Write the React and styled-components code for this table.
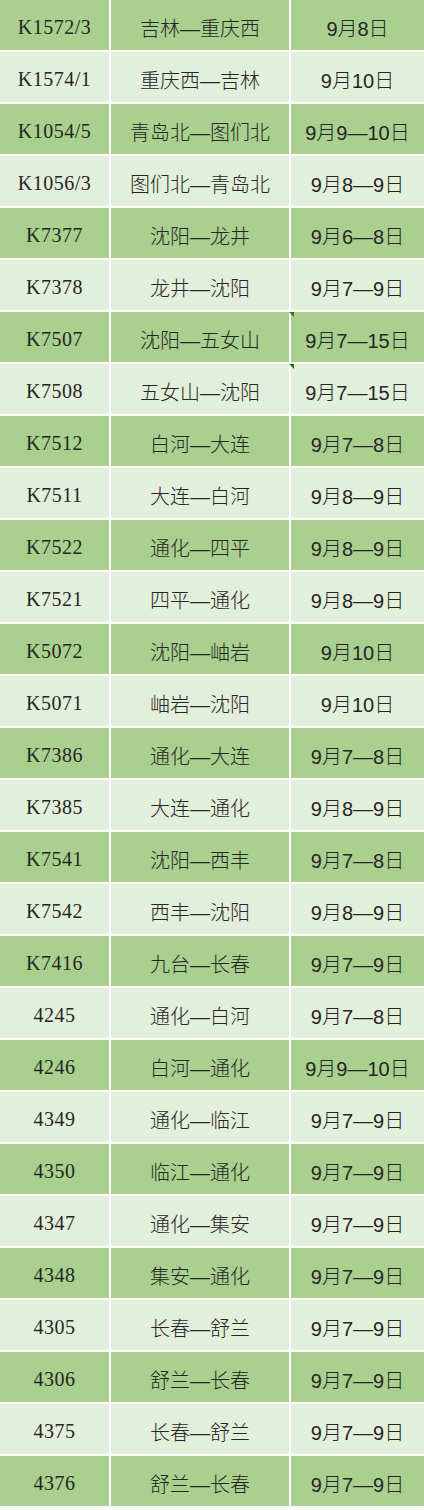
import React from 'react'
import styled, { createGlobalStyle } from 'styled-components';

//data
const trains = [
   ['K1572/3', '吉林—重庆西', '9月8日'],
   ['K1574/1', '重庆西—吉林', '9月10日'],
   ['K1054/5', '青岛北—图们北', '9月9—10日'],
   ['K1056/3', '图们北—青岛北', '9月8—9日'],
   ['K7377', '沈阳—龙井', '9月6—8日'],
   ['K7378', '龙井—沈阳', '9月7—9日'],
   ['K7507', '沈阳—五女山', '9月7—15日', true],
   ['K7508', '五女山—沈阳', '9月7—15日', true],
   ['K7512', '白河—大连', '9月7—8日'],
   ['K7511', '大连—白河', '9月8—9日'],
   ['K7522', '通化—四平', '9月8—9日'],
   ['K7521', '四平—通化', '9月8—9日'],
   ['K5072', '沈阳—岫岩', '9月10日'],
   ['K5071', '岫岩—沈阳', '9月10日'],
   ['K7386', '通化—大连', '9月7—8日'],
   ['K7385', '大连—通化', '9月8—9日'],
   ['K7541', '沈阳—西丰', '9月7—8日'],
   ['K7542', '西丰—沈阳', '9月8—9日'],
   ['K7416', '九台—长春', '9月7—9日'],
   ['4245', '通化—白河', '9月7—8日'],
   ['4246', '白河—通化', '9月9—10日'],
   ['4349', '通化—临江', '9月7—9日'],
   ['4350', '临江—通化', '9月7—9日'],
   ['4347', '通化—集安', '9月7—9日'],
   ['4348', '集安—通化', '9月7—9日'],
   ['4305', '长春—舒兰', '9月7—9日'],
   ['4306', '舒兰—长春', '9月7—9日'],
   ['4375', '长春—舒兰', '9月7—9日'],
   ['4376', '舒兰—长春', '9月7—9日'],
];

const GlobalStyle = createGlobalStyle`
   html, body {
      margin: 0;
      padding: 0;
      background: #ffffff;
   }
`;

const App = () => {
   return (
      <>
         <GlobalStyle />
         <StTable>
            {trains.map(([no, route, date, flagged], i) => (
               <StRow key={no + i} dark={i % 2 === 0}>
                  <StNumber>{no}</StNumber>
                  <StCell>{route}</StCell>
                  <StCell>
                     {flagged && <StMarker />}
                     {date}
                  </StCell>
               </StRow>
            ))}
         </StTable>
      </>
   )
}

const StTable = styled.div`
   width: 424px;
   height: 1510px;
   display: grid;
   grid-template-rows: repeat(29, 50px);
   row-gap: 2px;
   align-content: start;
   background: #ffffff;
`;

const StRow = styled.div.withConfig({ shouldForwardProp: (p) => p !== 'dark' })`
   display: grid;
   grid-template-columns: 109px 178px 133px;
   column-gap: 2px;
   > div {
      background: ${(p) => (p.dark ? '#a9d08e' : '#e2efda')};
   }
`;

const StCell = styled.div`
   position: relative;
   display: flex;
   align-items: center;
   justify-content: center;
   padding-top: 5px;
   box-sizing: border-box;
   font-family: "Liberation Sans", "Noto Sans CJK SC", sans-serif;
   font-size: 20px;
   font-weight: 300;
   color: #262626;
   white-space: nowrap;
`;

const StNumber = styled(StCell)`
   font-family: "Liberation Serif", "Noto Sans CJK SC", serif;
   font-size: 20px;
   font-weight: 400;
   letter-spacing: 0.5px;
`;

const StMarker = styled.span`
   position: absolute;
   left: -2px;
   top: 0;
   width: 5px;
   height: 5px;
   background: #1e7a1e;
   clip-path: polygon(0 0, 100% 0, 100% 100%);
`;

export default App
